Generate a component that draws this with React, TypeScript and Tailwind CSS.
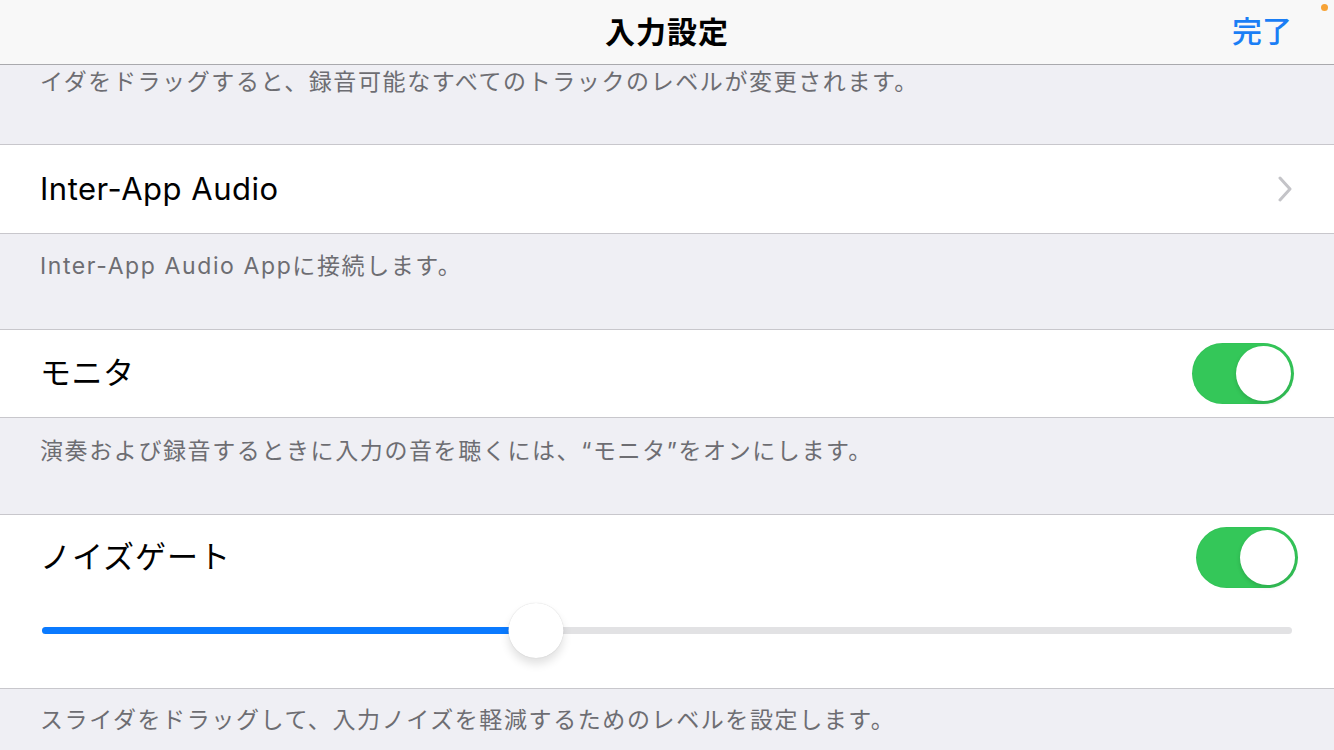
import { useState, type ReactNode } from "react";

const font = { fontFamily: '"Inter", "Noto Sans CJK JP", sans-serif' };

function Toggle({ on, onClick }: { on: boolean; onClick: () => void }) {
  return (
    <button
      onClick={onClick}
      className={
        on
          ? "relative h-[61px] w-[102px] rounded-full bg-[#34c759] shadow-[inset_0_0_0_1px_rgba(0,0,0,0.02)]"
          : "relative h-[61px] w-[102px] rounded-full bg-[#e5e5ea]"
      }
    >
      <span
        className={
          on
            ? "absolute right-[3px] top-[3px] h-[55px] w-[55px] rounded-full bg-white shadow-[0_2px_4px_rgba(0,0,0,0.15)]"
            : "absolute left-[3px] top-[3px] h-[55px] w-[55px] rounded-full bg-white shadow-[0_2px_4px_rgba(0,0,0,0.15)]"
        }
      />
    </button>
  );
}

function Footer({ children, className }: { children: ReactNode; className: string }) {
  return (
    <div className={`bg-[#efeff4] px-[40px] text-[23px] leading-[30px] tracking-[1.6px] whitespace-nowrap text-[#6d6d72] ${className}`}>
      {children}
    </div>
  );
}

export default function App() {
  const [monitor, setMonitor] = useState(true);
  const [gate, setGate] = useState(true);
  const [level, setLevel] = useState(39.6);

  return (
    <div className="h-[750px] w-[1334px] overflow-hidden bg-[#efeff4]" style={font}>
      {/* Nav bar */}
      <div className="relative flex h-[65px] items-center justify-center border-b border-[#a9a9ad] bg-[#f8f8f8]">
        <h1 className="text-[30px] font-bold tracking-[1px] text-black">入力設定</h1>
        <button className="absolute right-[42px] top-[9px] text-[30px] font-medium text-[#1a7ef5]">
          完了
        </button>
        <span className="absolute right-[6px] top-[4px] h-[7px] w-[7px] rounded-full bg-[#f7a336]" />
      </div>

      <Footer className="h-[79px] pt-[2px]">
        イダをドラッグすると、録音可能なすべてのトラックのレベルが変更されます。
      </Footer>

      {/* Inter-App Audio */}
      <div className="flex h-[90px] items-center justify-between border-y border-[#c8c7cc] bg-white pl-[40px] pr-[42px]">
        <span className="text-[31px] tracking-[0.5px] text-black">Inter-App Audio</span>
        <svg width="14" height="26" viewBox="0 0 14 26" fill="none">
          <path d="M2 2l10 11L2 24" stroke="#c4c4c8" strokeWidth="3" strokeLinecap="round" strokeLinejoin="round" />
        </svg>
      </div>

      <Footer className="h-[95px] pt-[17px]">Inter-App Audio Appに接続します。</Footer>

      {/* Monitor */}
      <div className="flex h-[89px] items-center justify-between border-y border-[#c8c7cc] bg-white pl-[40px] pr-[40px]">
        <span className="text-[31px] tracking-[0.5px] text-black">モニタ</span>
        <Toggle on={monitor} onClick={() => setMonitor(!monitor)} />
      </div>

      <Footer className="h-[96px] pt-[18px]">
        演奏および録音するときに入力の音を聴くには、“モニタ”をオンにします。
      </Footer>

      {/* Noise gate */}
      <div className="flex h-[175px] flex-col border-y border-[#c8c7cc] bg-white pl-[40px] pr-[36px]">
        <div className="flex items-center justify-between pt-[12px]">
          <span className="text-[31px] tracking-[1px] text-black">ノイズゲート</span>
          <Toggle on={gate} onClick={() => setGate(!gate)} />
        </div>
        <div className="relative mr-[6px] mt-[15px] h-[55px]">
          <div className="absolute left-[2px] right-0 top-[24px] h-[7px] rounded-full bg-[#e2e2e4]" />
          <div
            className="absolute left-[2px] top-[24px] h-[7px] rounded-full bg-[#0a7aff]"
            style={{ width: `${level}%` }}
          />
          <input
            type="range"
            min={0}
            max={100}
            step={0.1}
            value={level}
            onChange={(e) => setLevel(Number(e.target.value))}
            className="absolute inset-0 z-10 w-full cursor-pointer opacity-0"
          />
          <div
            className="absolute top-0 h-[55px] w-[55px] -translate-x-1/2 rounded-full bg-white shadow-[0_6px_10px_rgba(0,0,0,0.12),0_0_1px_rgba(0,0,0,0.2)]"
            style={{ left: `${level}%` }}
          />
        </div>
      </div>

      <Footer className="h-[61px] pt-[16px]">
        スライダをドラッグして、入力ノイズを軽減するためのレベルを設定します。
      </Footer>
    </div>
  );
}
